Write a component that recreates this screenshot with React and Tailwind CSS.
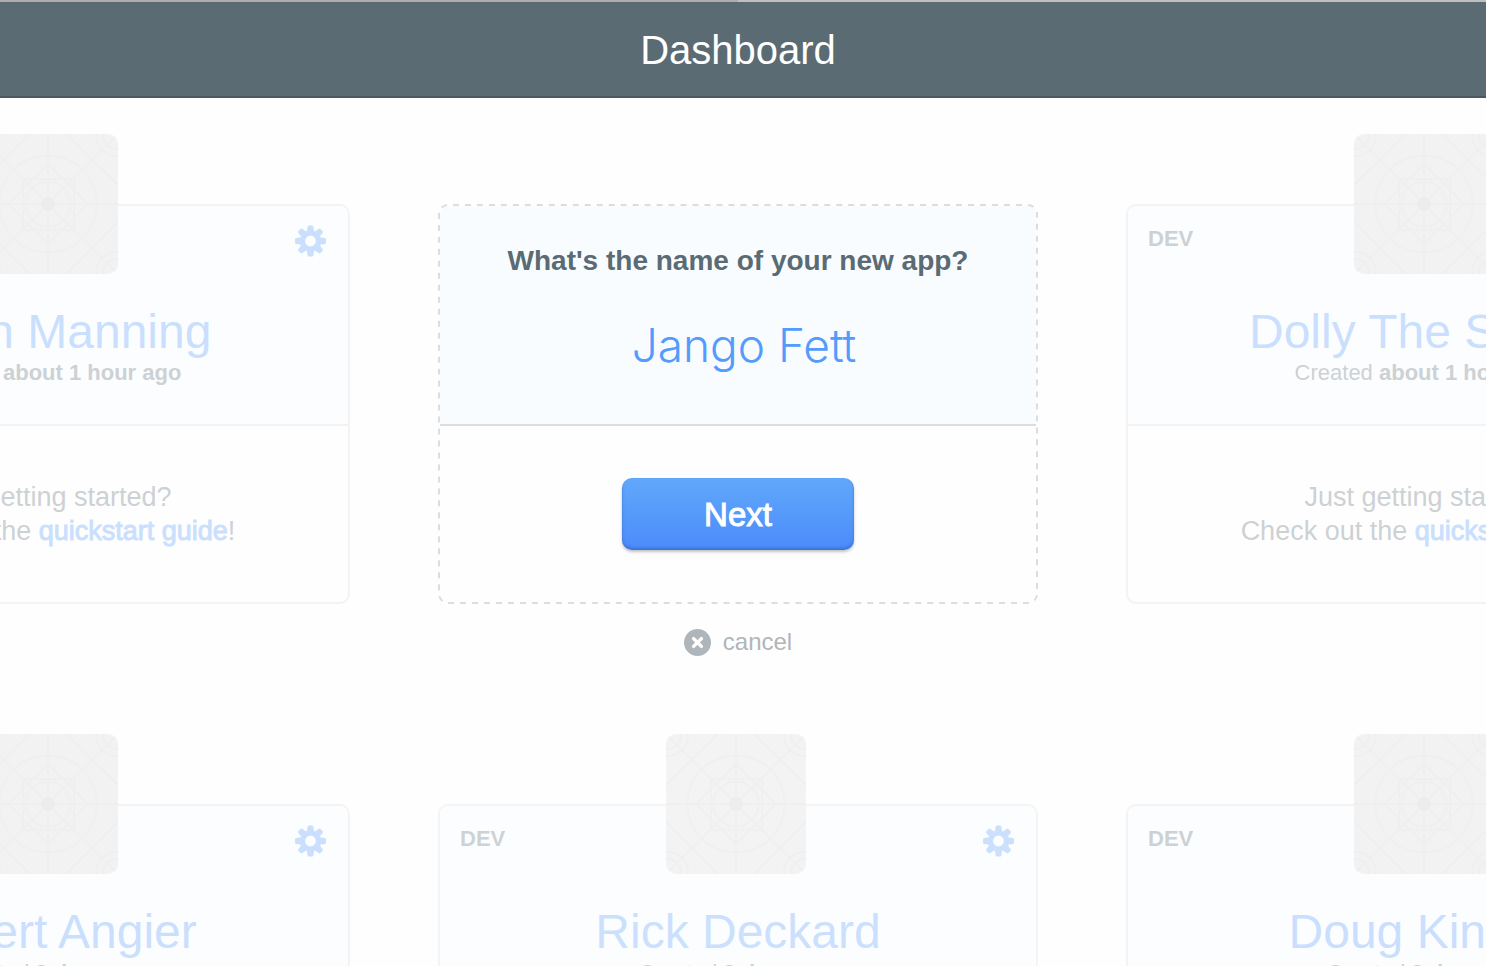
function GearIcon() {
  return (
    <svg viewBox="0 0 32 32" className="size-8 fill-[#549bfb]" aria-hidden="true">
      <circle cx="16.5" cy="16" r="8" fill="none" stroke="#549bfb" strokeWidth="5.2" />
      {[0, 45, 90, 135, 180, 225, 270, 315].map((a) => (
        <path
          key={a}
          transform={`rotate(${a} 16.5 16)`}
          d="M12.8 7.5 L13.6 1.8 Q13.8 .5 15 .5 H18 Q19.2 .5 19.4 1.8 L20.2 7.5 Z"
        />
      ))}
    </svg>
  );
}

function PlaceholderIcon() {
  return (
    <svg
      viewBox="0 0 140 140"
      className="absolute -top-[72px] left-[226px] size-[140px] rounded-[10px] bg-[#d9d9d9]"
      fill="none"
      stroke="#cecece"
      strokeWidth="1.8"
      aria-hidden="true"
    >
      <path d="M0 70H140M70 0V140M0 0L140 140M140 0L0 140" />
      <path d="M52 0L0 51M88 0L140 51M0 88L52 140M140 88L88 140" />
      <path d="M70 30L110 70L70 110L30 70Z" />
      <rect x="45" y="45" width="51" height="51" />
      <circle cx="70" cy="70" r="48.5" />
      <circle cx="70" cy="70" r="22.5" />
      <circle cx="70" cy="70" r="7" fill="#c6c6c6" stroke="none" />
      <circle cx="2" cy="2" r="20" />
      <circle cx="138" cy="2" r="20" />
      <circle cx="2" cy="138" r="20" />
      <circle cx="138" cy="138" r="20" />
      <circle cx="2" cy="2" r="13" />
      <circle cx="138" cy="2" r="13" />
      <circle cx="2" cy="138" r="13" />
      <circle cx="138" cy="138" r="13" />
    </svg>
  );
}

function DashedOutline() {
  return (
    <svg
      className="pointer-events-none absolute -top-0.5 -left-0.5 h-[calc(100%+4px)] w-[calc(100%+4px)] overflow-visible p-px"
      aria-hidden="true"
    >
      <rect
        width="100%"
        height="100%"
        rx="9"
        fill="none"
        stroke="#dcdddd"
        strokeWidth="2"
        pathLength="1980"
        strokeDasharray="6 6"
        strokeDashoffset="-5"
      />
    </svg>
  );
}

function AppCard({ name, created }) {
  return (
    <article className="relative h-[400px] rounded-[10px] border-2 border-[#dcdddd] bg-white opacity-30">
      <PlaceholderIcon />
      <div className="h-[220px] rounded-t-lg border-b-2 border-[#dcdddd] bg-[#f8fcff] pt-[19px] text-center">
        <div className="flex h-8 items-start justify-between pr-[22px] pl-5">
          <span className="text-[22px] leading-7 font-bold">DEV</span>
          <button type="button" aria-label={`Settings for ${name}`}>
            <GearIcon />
          </button>
        </div>
        <h2 className="mt-12 text-[48px] leading-[54px] text-[#549bfb]">{name}</h2>
        <p className="text-[22px] leading-7">
          Created <strong>{created}</strong>
        </p>
      </div>
      <div className="flex h-44 flex-col justify-center text-center text-[27px] leading-[34px]">
        <p>Just getting started?</p>
        <p>
          Check out the{" "}
          <a href="#quickstart" className="text-[#549bfb] [-webkit-text-stroke:1px_#549bfb]">
            quickstart guide
          </a>
          !
        </p>
      </div>
    </article>
  );
}

function NewAppForm() {
  return (
    <form onSubmit={(e) => e.preventDefault()}>
      <div className="relative h-[400px] rounded-[10px] border-2 border-transparent">
        <DashedOutline />
        <div className="h-[220px] rounded-t-lg border-b-2 border-[#dcdddd] bg-[#f8fcff] pt-[37px] text-center">
          <label htmlFor="app-name" className="block text-[28px] leading-9 font-bold">
            What's the name of your new app?
          </label>
          <input
            id="app-name"
            type="text"
            defaultValue="Jango Fett"
            className="mt-[34px] block h-16 w-full bg-transparent pl-3 text-center font-[Inter,sans-serif] text-[46px] font-light text-[#549bfb] outline-none"
          />
        </div>
        <div className="flex h-44 items-center justify-center">
          <button
            type="submit"
            className="h-[72px] w-[232px] rounded-[10px] bg-linear-to-b from-[#61a8fa] to-[#4b8bfa] pt-0.5 text-[33px] text-white shadow-[inset_0_-2px_3px_rgba(40,90,180,0.5),0_2px_3px_rgba(60,50,50,0.3)] [-webkit-text-stroke:1px_white]"
          >
            Next
          </button>
        </div>
      </div>
      <button
        type="button"
        className="mx-auto mt-6 flex h-7 items-center gap-3 text-[24px] leading-7 text-[#aeb6bc]"
      >
        <svg viewBox="0 0 27 27" className="size-[27px]" aria-hidden="true">
          <circle cx="13.5" cy="13.5" r="13.5" fill="#aeb6bc" />
          <path
            d="M9.6 9.6L17.4 17.4M17.4 9.6L9.6 17.4"
            stroke="#fff"
            strokeWidth="3.4"
            strokeLinecap="round"
          />
        </svg>
        cancel
      </button>
    </form>
  );
}

export default function App() {
  return (
    <div className='h-screen overflow-hidden bg-[#fefefe] font-["Liberation_Sans",Arial,sans-serif] text-[#5a6b74]'>
      <div className="flex h-0.5 pr-2.5 bg-[#bfbfbf]">
        <div className="w-1/2 bg-[#adadad]" />
      </div>
      <header className="flex h-24 items-center justify-center border-b-2 border-[#4b5963] bg-[#5a6b74] pt-0.5 pr-2.5">
        <h1 className="text-[40px] leading-[48px] text-white">Dashboard</h1>
      </header>
      <main className="flex justify-center pt-[106px] pr-2.5">
        <div className="grid shrink-0 grid-cols-[repeat(3,600px)] gap-x-[88px] gap-y-[148px]">
          <AppCard name="Bryan Manning" created="about 1 hour ago" />
          <NewAppForm />
          <AppCard name="Dolly The Sheep" created="about 1 hour ago" />
          <AppCard name="Robert Angier" created="2 days ago" />
          <AppCard name="Rick Deckard" created="2 days ago" />
          <AppCard name="Doug Kinney" created="2 days ago" />
        </div>
      </main>
    </div>
  );
}
